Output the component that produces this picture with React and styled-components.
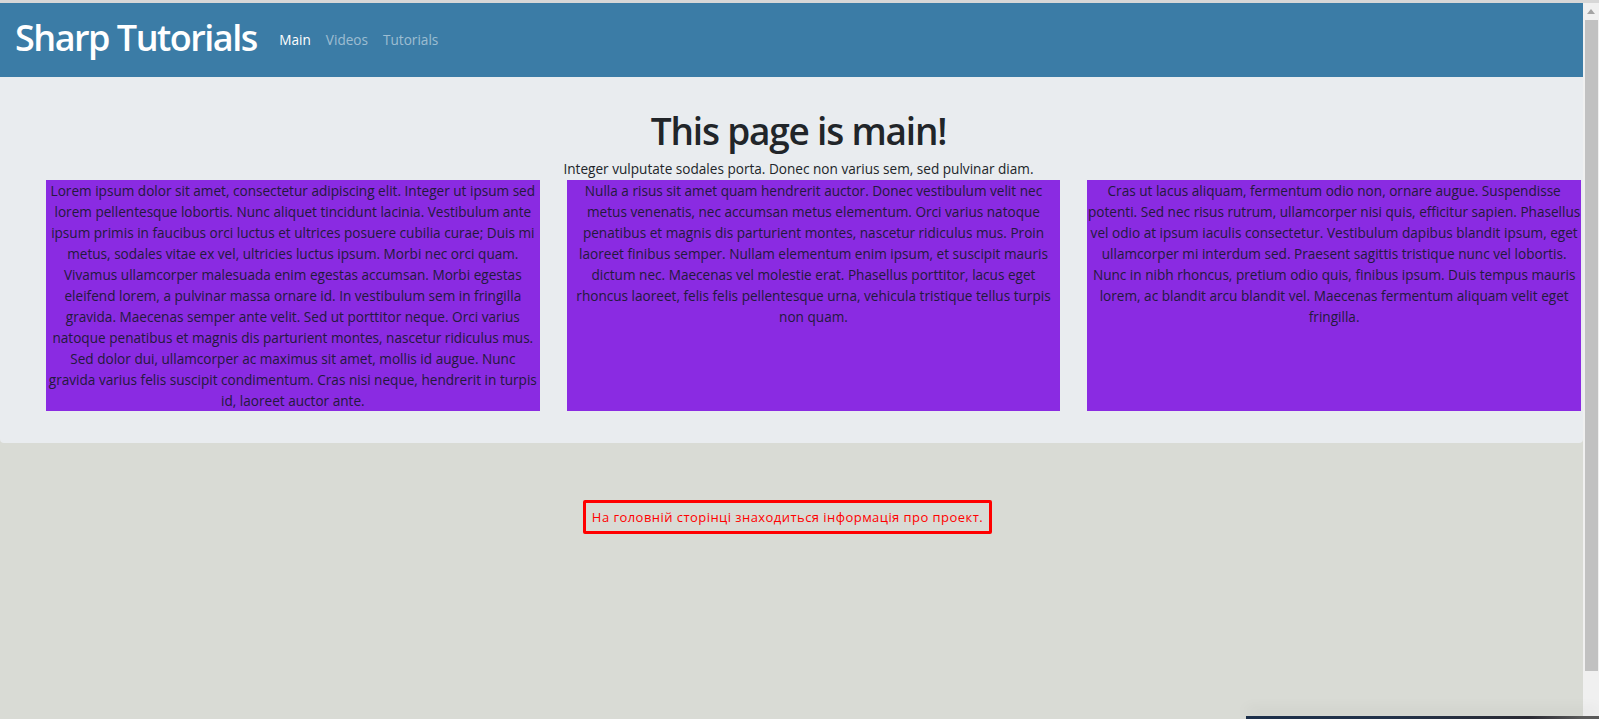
import React from "react";
import styled, { createGlobalStyle } from "styled-components";

const GlobalStyle = createGlobalStyle`
  html, body {
    margin: 0;
    padding: 0;
    height: 100%;
    overflow: hidden;
  }
  body {
    background: #d9dbd5;
    font-family: "Open Sans", "Noto Sans", sans-serif;
    color: #212529;
  }
`;

const Screen = styled.div`
  position: relative;
  display: flex;
  height: 719px;
  box-sizing: border-box;
  border-top: 3px solid #d7d7d7;
`;

const Page = styled.div`
  flex: 1;
  display: flex;
  flex-direction: column;
  min-width: 0;
`;

const Navbar = styled.nav`
  display: flex;
  align-items: center;
  height: 74px;
  padding: 0 15px;
  background: #3b7ca6;
`;

const Brand = styled.a`
  margin-right: 15px;
  padding-bottom: 5px;
  font-size: 36px;
  font-weight: 600;
  letter-spacing: -1.5px;
  line-height: 1.2;
  color: #fff;
  text-decoration: none;
`;

const NavList = styled.div`
  display: flex;
`;

const NavLink = styled.a`
  padding: 0 7.5px;
  font-size: 13.6px;
  line-height: 20px;
  color: ${(p) => (p.$active ? "#fff" : "rgba(255, 255, 255, 0.5)")};
  text-decoration: none;
`;

const Jumbotron = styled.section`
  padding: 32px 2px 32px 0;
  background: #e9ecef;
  border-radius: 0 0 4px 4px;
`;

const Intro = styled.div`
  padding-left: 16px;
  text-align: center;
`;

const Title = styled.h1`
  margin: 0 0 5px;
  font-size: 37px;
  font-weight: 600;
  letter-spacing: -1.2px;
  line-height: 44px;
  color: #212529;
`;

const Lead = styled.p`
  margin: 0 0 1px;
  font-size: 13.6px;
  line-height: 21px;
`;

const Columns = styled.div`
  display: grid;
  grid-template-columns: repeat(3, 1fr);
  column-gap: 27px;
  padding-left: 46px;
`;

const Column = styled.div`
  background: #8a2be2;
  color: #241a3c;
  font-size: 13.6px;
  line-height: 21px;
  text-align: center;
`;

const Line = styled.span`
  display: block;
  white-space: nowrap;
`;

const NoticeRow = styled.div`
  display: flex;
  justify-content: center;
  padding: 57px 8px 0 0;
`;

const Notice = styled.p`
  margin: 0;
  padding: 4px 6px;
  border: 3px solid #ff0000;
  border-radius: 2px;
  font-size: 13px;
  letter-spacing: 0.45px;
  line-height: 20px;
  color: #ff0000;
`;

const Scrollbar = styled.div`
  display: flex;
  flex-direction: column;
  width: 16px;
  background: #f0f0f0;
`;

const ScrollArrow = styled.div`
  display: flex;
  align-items: center;
  justify-content: center;
  height: 17px;
`;

const ScrollThumb = styled.div`
  height: 651px;
  margin: 0 1px 0 2px;
  background: #c1c1c1;
`;

const WindowEdge = styled.div`
  position: absolute;
  left: 1246px;
  right: 0;
  bottom: 0;
  height: 3px;
  background: linear-gradient(90deg, #1c2f4a 0%, #22324a 40%, #2a2a33 80%, #5a5a5a 95%);
  box-shadow: 0 -6px 14px rgba(0, 0, 0, 0.12);
`;

const columns = [
  [
    "Lorem ipsum dolor sit amet, consectetur adipiscing elit. Integer ut ipsum sed",
    "lorem pellentesque lobortis. Nunc aliquet tincidunt lacinia. Vestibulum ante",
    "ipsum primis in faucibus orci luctus et ultrices posuere cubilia curae; Duis mi",
    "metus, sodales vitae ex vel, ultricies luctus ipsum. Morbi nec orci quam.",
    "Vivamus ullamcorper malesuada enim egestas accumsan. Morbi egestas",
    "eleifend lorem, a pulvinar massa ornare id. In vestibulum sem in fringilla",
    "gravida. Maecenas semper ante velit. Sed ut porttitor neque. Orci varius",
    "natoque penatibus et magnis dis parturient montes, nascetur ridiculus mus.",
    "Sed dolor dui, ullamcorper ac maximus sit amet, mollis id augue. Nunc",
    "gravida varius felis suscipit condimentum. Cras nisi neque, hendrerit in turpis",
    "id, laoreet auctor ante.",
  ],
  [
    "Nulla a risus sit amet quam hendrerit auctor. Donec vestibulum velit nec",
    "metus venenatis, nec accumsan metus elementum. Orci varius natoque",
    "penatibus et magnis dis parturient montes, nascetur ridiculus mus. Proin",
    "laoreet finibus semper. Nullam elementum enim ipsum, et suscipit mauris",
    "dictum nec. Maecenas vel molestie erat. Phasellus porttitor, lacus eget",
    "rhoncus laoreet, felis felis pellentesque urna, vehicula tristique tellus turpis",
    "non quam.",
  ],
  [
    "Cras ut lacus aliquam, fermentum odio non, ornare augue. Suspendisse",
    "potenti. Sed nec risus rutrum, ullamcorper nisi quis, efficitur sapien. Phasellus",
    "vel odio at ipsum iaculis consectetur. Vestibulum dapibus blandit ipsum, eget",
    "ullamcorper mi interdum sed. Praesent sagittis tristique nunc vel lobortis.",
    "Nunc in nibh rhoncus, pretium odio quis, finibus ipsum. Duis tempus mauris",
    "lorem, ac blandit arcu blandit vel. Maecenas fermentum aliquam velit eget",
    "fringilla.",
  ],
];

export default function App() {
  return (
    <>
      <GlobalStyle />
      <Screen>
        <Page>
          <Navbar>
            <Brand href="#">Sharp Tutorials</Brand>
            <NavList>
              <NavLink href="#" $active>Main</NavLink>
              <NavLink href="#">Videos</NavLink>
              <NavLink href="#">Tutorials</NavLink>
            </NavList>
          </Navbar>
          <Jumbotron>
            <Intro>
              <Title>This page is main!</Title>
              <Lead>Integer vulputate sodales porta. Donec non varius sem, sed pulvinar diam.</Lead>
            </Intro>
            <Columns>
              {columns.map((lines, i) => (
                <Column key={i}>
                  {lines.map((text, j) => (
                    <Line key={j}>{text}</Line>
                  ))}
                </Column>
              ))}
            </Columns>
          </Jumbotron>
          <NoticeRow>
            <Notice>На головній сторінці знаходиться інформація про проект.</Notice>
          </NoticeRow>
        </Page>
        <Scrollbar>
          <ScrollArrow>
            <svg width="8" height="5" viewBox="0 0 8 5">
              <path d="M0 5 L4 0 L8 5 Z" fill="#a3a3a3" />
            </svg>
          </ScrollArrow>
          <ScrollThumb />
        </Scrollbar>
        <WindowEdge />
      </Screen>
    </>
  );
}
